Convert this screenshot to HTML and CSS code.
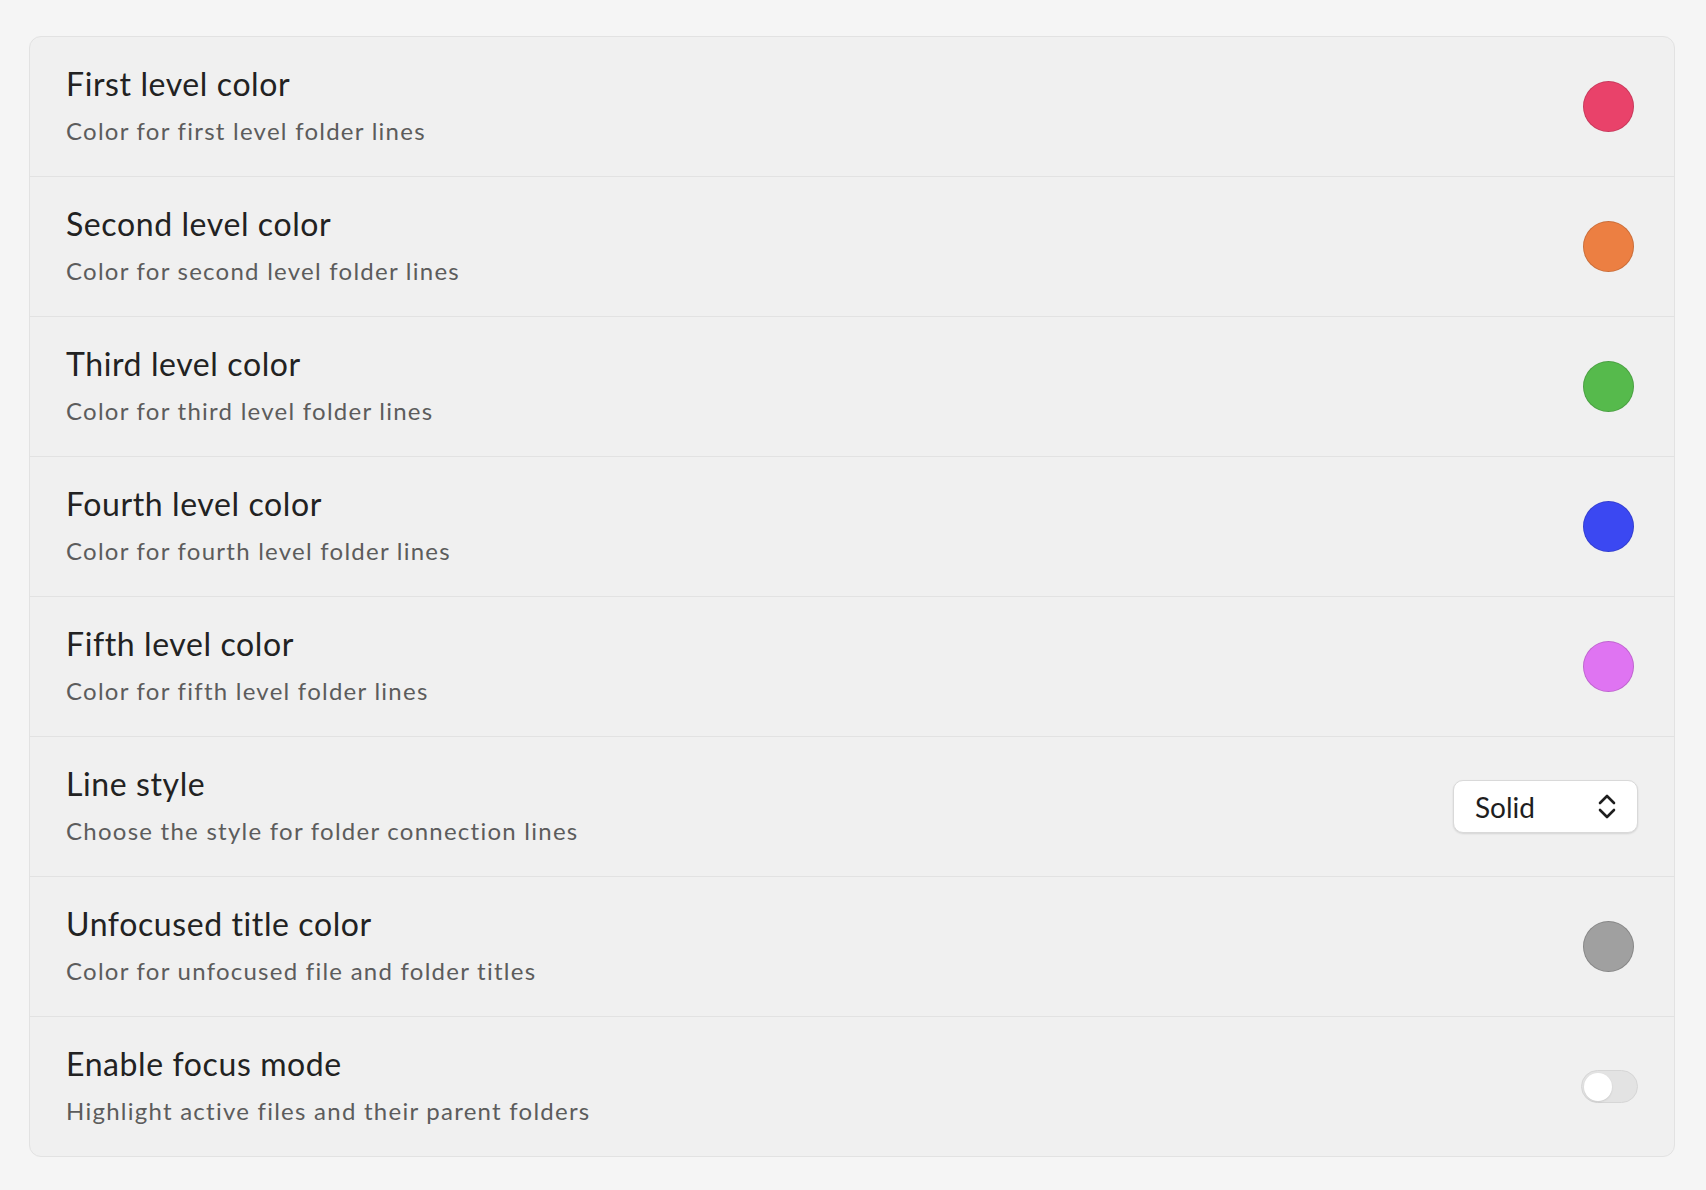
FILE: index.html
```html
<!DOCTYPE html>
<html lang="en">
<head>
<meta charset="utf-8">
<title>Folder line settings</title>
<link rel="stylesheet" href="styles.css">
</head>
<body>
<div class="page">
  <div class="card">
    <div class="row">
      <div class="info">
        <div class="title">First level color</div>
        <div class="desc">Color for first level folder lines</div>
      </div>
      <div class="swatch red"></div>
    </div>
    <div class="row">
      <div class="info">
        <div class="title">Second level color</div>
        <div class="desc">Color for second level folder lines</div>
      </div>
      <div class="swatch orange"></div>
    </div>
    <div class="row">
      <div class="info">
        <div class="title">Third level color</div>
        <div class="desc">Color for third level folder lines</div>
      </div>
      <div class="swatch green"></div>
    </div>
    <div class="row">
      <div class="info">
        <div class="title">Fourth level color</div>
        <div class="desc">Color for fourth level folder lines</div>
      </div>
      <div class="swatch blue"></div>
    </div>
    <div class="row">
      <div class="info">
        <div class="title">Fifth level color</div>
        <div class="desc">Color for fifth level folder lines</div>
      </div>
      <div class="swatch pink"></div>
    </div>
    <div class="row">
      <div class="info">
        <div class="title">Line style</div>
        <div class="desc">Choose the style for folder connection lines</div>
      </div>
      <div class="select">
        <span class="select-label">Solid</span>
        <svg class="chev" width="20" height="27" viewBox="0 0 20 27" fill="none" stroke="#1e1e1e" stroke-width="2.6" stroke-linecap="round" stroke-linejoin="round">
          <path d="M3 10 L10 3 L17 10"/>
          <path d="M3 17 L10 24 L17 17"/>
        </svg>
      </div>
    </div>
    <div class="row">
      <div class="info">
        <div class="title">Unfocused title color</div>
        <div class="desc">Color for unfocused file and folder titles</div>
      </div>
      <div class="swatch gray"></div>
    </div>
    <div class="row">
      <div class="info">
        <div class="title">Enable focus mode</div>
        <div class="desc">Highlight active files and their parent folders</div>
      </div>
      <div class="toggle"><div class="knob"></div></div>
    </div>
  </div>
</div>
</body>
</html>
```

FILE: styles.css
```css
html, body {
  margin: 0;
  padding: 0;
  background: #f5f5f5;
}

body {
  font-family: "Lato", "Noto Sans", sans-serif;
  color: #222222;
}

.page {
  padding: 36px 31px 0 29px;
}

.card {
  background: #f0f0f0;
  border: 1.5px solid #e2e2e2;
  border-radius: 12px;
  display: flex;
  flex-direction: column;
}

.row {
  display: flex;
  align-items: center;
  justify-content: space-between;
  padding: 0 36px;
  border-top: 1.5px solid #e2e2e2;
  box-sizing: border-box;
  height: 140px;
}

.row:first-child {
  border-top: none;
  height: 139px;
}

.info {
  display: flex;
  flex-direction: column;
  gap: 13px;
  padding-bottom: 4px;
}

.title {
  font-size: 32px;
  line-height: 38px;
  letter-spacing: 0.6px;
  color: #222222;
}

.desc {
  font-size: 24px;
  line-height: 29px;
  letter-spacing: 1.25px;
  color: #5c5c5c;
}

.swatch {
  width: 49px;
  height: 49px;
  border-radius: 50%;
  margin-right: 4px;
  border: 1.5px solid rgba(0, 0, 0, 0.14);
}

.red { background: #e9426a; }
.orange { background: #ec7f42; }
.green { background: #56ba4c; }
.blue { background: #3b48f2; }
.pink { background: #df74f2; }
.gray { background: #a0a0a0; border-color: rgba(0, 0, 0, 0.16); }

.select {
  width: 185px;
  height: 53px;
  box-sizing: border-box;
  background: #ffffff;
  border: 1px solid #d9d9d9;
  border-radius: 10px;
  box-shadow: 0 1px 2px rgba(0, 0, 0, 0.12);
  display: flex;
  align-items: center;
  justify-content: space-between;
  padding: 0 20px 0 21px;
}

.select-label {
  font-size: 28px;
  color: #1e1e1e;
}

.chev {
  display: block;
}

.toggle {
  width: 57px;
  height: 33px;
  box-sizing: border-box;
  border-radius: 17px;
  background: #e3e3e3;
  border: 1.5px solid #d6d6d6;
  display: flex;
  align-items: center;
  padding-left: 1.5px;
}

.knob {
  width: 28px;
  height: 28px;
  border-radius: 50%;
  background: #ffffff;
  box-shadow: 0 1px 2px rgba(0, 0, 0, 0.1);
}
```
